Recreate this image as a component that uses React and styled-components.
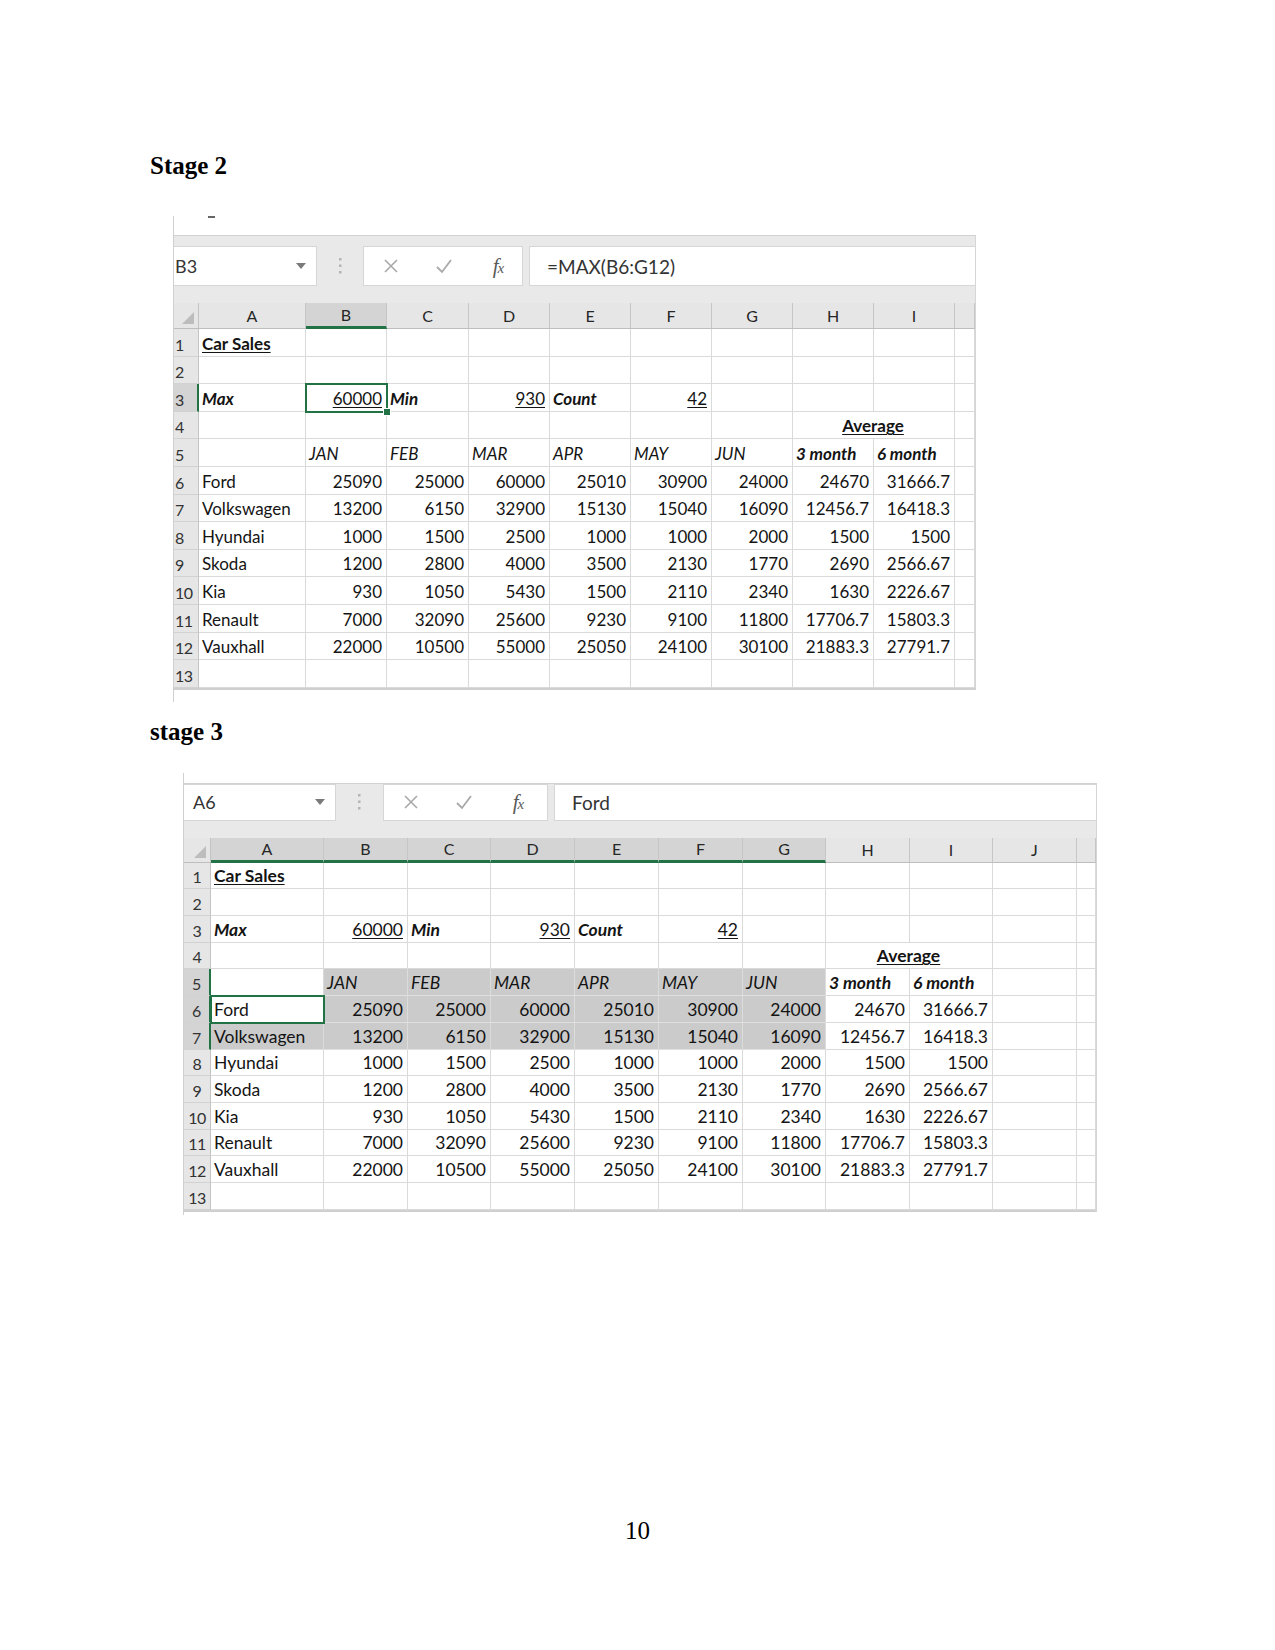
import React from "react";
import styled, { createGlobalStyle, css } from "styled-components";

const GREEN = "#217346";

const GlobalStyle = createGlobalStyle`
  body {
    margin: 0;
    background: #fff;
  }
`;

const cars = [
  ["Ford", "25090", "25000", "60000", "25010", "30900", "24000", "24670", "31666.7"],
  ["Volkswagen", "13200", "6150", "32900", "15130", "15040", "16090", "12456.7", "16418.3"],
  ["Hyundai", "1000", "1500", "2500", "1000", "1000", "2000", "1500", "1500"],
  ["Skoda", "1200", "2800", "4000", "3500", "2130", "1770", "2690", "2566.67"],
  ["Kia", "930", "1050", "5430", "1500", "2110", "2340", "1630", "2226.67"],
  ["Renault", "7000", "32090", "25600", "9230", "9100", "11800", "17706.7", "15803.3"],
  ["Vauxhall", "22000", "10500", "55000", "25050", "24100", "30100", "21883.3", "27791.7"],
];

const months = ["JAN", "FEB", "MAR", "APR", "MAY", "JUN"];

// builds 13 rows of cells, each row padded to `ncols` data columns
const buildRows = (ncols) => {
  const pad = (cells) => {
    const used = cells.reduce((n, c) => n + (c.span || 1), 0);
    return [...cells, ...Array.from({ length: ncols - used }, () => ({}))];
  };
  const rows = [];
  rows.push(pad([{ text: "Car Sales ", kind: "title" }]));
  rows.push(pad([]));
  rows.push(
    pad([
      { text: "Max", kind: "label" },
      { text: "60000", kind: "under" },
      { text: "Min", kind: "label" },
      { text: "930", kind: "under" },
      { text: "Count", kind: "label" },
      { text: "42", kind: "under" },
    ])
  );
  rows.push(pad([{}, {}, {}, {}, {}, {}, {}, { text: "Average", kind: "average", span: 2 }]));
  rows.push(
    pad([
      {},
      ...months.map((m) => ({ text: m, kind: "month" })),
      { text: "3 month", kind: "label" },
      { text: "6 month", kind: "label" },
    ])
  );
  cars.forEach((car) => {
    rows.push(
      pad(car.map((v, i) => ({ text: v, kind: i === 0 ? "name" : "num" })))
    );
  });
  rows.push(pad([]));
  return rows;
};

const kindStyles = {
  title: { $bold: true, $under: true },
  label: { $bold: true, $italic: true },
  under: { $under: true, $align: "right" },
  month: { $italic: true },
  average: { $bold: true, $under: true, $align: "center" },
  name: {},
  num: { $align: "right" },
};

const Page = styled.div`
  width: 1275px;
  min-height: 1650px;
  font-family: "Liberation Serif", "Times New Roman", serif;
  color: #000;
`;

const Content = styled.div`
  padding: 151px 0 0 150px;
`;

const Heading = styled.h2`
  margin: ${(p) => p.$top || 0}px 0 0;
  font: bold 25px/29px "Liberation Serif", "Times New Roman", serif;
`;

const Shot = styled.div`
  width: ${(p) => p.$width}px;
  margin-left: ${(p) => p.$left}px;
  margin-top: ${(p) => p.$top}px;
`;

const Strip = styled.div`
  height: ${(p) => p.$h}px;
  border-left: 1px solid #d0d0d0;
`;

const Dash = styled.div`
  width: 7px;
  height: 2px;
  margin: 2px 0 0 34px;
  background: #666;
`;

const Band = styled.div`
  display: flex;
  align-items: flex-start;
  box-sizing: border-box;
  height: ${(p) => p.$h}px;
  padding-top: ${(p) => p.$pad}px;
  background: #e9e9e9;
  border-top: 1px solid #d2d2d2;
  border-left: 1px solid #d0d0d0;
  border-right: 1px solid #d6d6d6;
`;

const NameBox = styled.div`
  display: flex;
  align-items: center;
  justify-content: space-between;
  box-sizing: border-box;
  width: ${(p) => p.$w}px;
  height: ${(p) => p.$h}px;
  padding: 0 10px 0 ${(p) => p.$padLeft}px;
  background: #fff;
  border: 1px solid #d6d6d6;
  border-left: none;
  font: 18px Lato, "Liberation Sans", sans-serif;
  color: #333;
`;

const Dots = styled.div`
  display: flex;
  align-items: center;
  justify-content: center;
  width: ${(p) => p.$w}px;
  height: ${(p) => p.$h}px;
`;

const ButtonBox = styled.div`
  display: grid;
  grid-template-columns: 54px 52px 56px;
  align-items: center;
  justify-items: center;
  box-sizing: border-box;
  width: ${(p) => p.$w}px;
  height: ${(p) => p.$h}px;
  background: #fff;
  border: 1px solid #d6d6d6;
`;

const Fx = styled.span`
  font: italic 21px "Liberation Serif", serif;
  color: #5a5a5a;
  letter-spacing: -1px;

  small {
    font-size: 15px;
  }
`;

const FormulaBox = styled.div`
  flex: 1;
  display: flex;
  align-items: center;
  box-sizing: border-box;
  height: ${(p) => p.$h}px;
  margin-left: 6px;
  padding-left: ${(p) => p.$padLeft}px;
  background: #fff;
  border: 1px solid #d6d6d6;
  border-right: none;
  font: 19px Lato, "Liberation Sans", sans-serif;
  color: #333;
`;

const Sheet = styled.div`
  display: grid;
  grid-template-columns: ${(p) => p.$cols};
  grid-template-rows: ${(p) => p.$headH}px repeat(13, ${(p) => p.$rowH}px);
  border-left: 1px solid #d0d0d0;
  border-right: 1px solid #d6d6d6;
  border-bottom: 2px solid #cfcfcf;
  font-family: Lato, "Liberation Sans", sans-serif;
  background: #fff;
`;

const Corner = styled.div`
  display: flex;
  align-items: flex-end;
  justify-content: flex-end;
  padding: 0 4px 4px 0;
  background: #e6e6e6;
  border-right: 1px solid #c4c4c4;
  border-bottom: 1px solid #bdbdbd;
`;

const ColHead = styled.div`
  display: flex;
  align-items: center;
  justify-content: center;
  background: ${(p) => (p.$sel ? "#d4d4d4" : "#e6e6e6")};
  border-right: 1px solid #c6c6c6;
  border-bottom: ${(p) => (p.$sel ? `3px solid ${GREEN}` : "1px solid #bdbdbd")};
  font-size: ${(p) => p.$fs}px;
  color: #262626;
`;

const RowHead = styled.div`
  display: flex;
  align-items: flex-end;
  justify-content: ${(p) => (p.$center ? "center" : "flex-start")};
  padding: 0 0 2px ${(p) => (p.$center ? 0 : 1)}px;
  background: ${(p) => (p.$sel ? "#d4d4d4" : "#e6e6e6")};
  border-right: ${(p) => (p.$sel ? `2px solid ${GREEN}` : "1px solid #c4c4c4")};
  border-bottom: 1px solid #d2d2d2;
  font-size: ${(p) => p.$fs}px;
  letter-spacing: -0.5px;
  color: #333;
`;

const Cell = styled.div`
  position: relative;
  display: flex;
  align-items: flex-end;
  justify-content: ${(p) =>
    p.$align === "right" ? "flex-end" : p.$align === "center" ? "center" : "flex-start"};
  grid-column: span ${(p) => p.$span || 1};
  min-width: 0;
  padding: 0 4px 2px 3px;
  white-space: nowrap;
  background: ${(p) => (p.$shade ? "#cbcbcb" : "#fff")};
  border-right: 1px solid ${(p) => (p.$shade ? "#dcdcdc" : "#dadada")};
  border-bottom: 1px solid ${(p) => (p.$shade ? "#e0e0e0" : "#dadada")};
  font-size: ${(p) => p.$fs}px;
  font-weight: ${(p) => (p.$bold ? 700 : 400)};
  font-style: ${(p) => (p.$italic ? "italic" : "normal")};
  text-decoration: ${(p) => (p.$under ? "underline" : "none")};
  text-underline-offset: 2px;
  color: #141414;

  ${(p) =>
    p.$active &&
    css`
      outline: 2px solid ${GREEN};
      outline-offset: -1px;
      z-index: 1;
    `}
`;

const Handle = styled.span`
  position: absolute;
  right: -5px;
  bottom: -5px;
  width: 6px;
  height: 6px;
  background: ${GREEN};
  border: 1px solid #fff;
`;

const Footer = styled.div`
  margin-top: ${(p) => p.$top}px;
  text-align: center;
  font: 25px/29px "Liberation Serif", "Times New Roman", serif;
`;

const Arrow = () => (
  <svg width="10" height="6" viewBox="0 0 10 6">
    <polygon points="0,0 10,0 5,6" fill="#7a7a7a" />
  </svg>
);

const VDots = () => (
  <svg width="3" height="16" viewBox="0 0 3 16">
    <rect x="0" y="0" width="2.5" height="2.5" fill="#b4b4b4" />
    <rect x="0" y="6.5" width="2.5" height="2.5" fill="#b4b4b4" />
    <rect x="0" y="13" width="2.5" height="2.5" fill="#b4b4b4" />
  </svg>
);

const Cross = () => (
  <svg width="16" height="16" viewBox="0 0 16 16">
    <path d="M2 2 L14 14 M14 2 L2 14" stroke="#a9a9a9" strokeWidth="1.6" fill="none" />
  </svg>
);

const Check = () => (
  <svg width="18" height="16" viewBox="0 0 18 16">
    <path d="M2 9 L7 14 L16 2" stroke="#a9a9a9" strokeWidth="1.8" fill="none" />
  </svg>
);

const CornerMark = () => (
  <svg width="12" height="12" viewBox="0 0 12 12">
    <polygon points="12,0 12,12 0,12" fill="#bdbdbd" />
  </svg>
);

const FormulaBar = ({ cfg }) => (
  <Band $h={cfg.bandH} $pad={cfg.bandPad}>
    <NameBox $w={cfg.nameW} $h={cfg.boxH} $padLeft={cfg.namePad}>
      {cfg.name}
      <Arrow />
    </NameBox>
    <Dots $w={cfg.dotsW} $h={cfg.boxH}>
      <VDots />
    </Dots>
    <ButtonBox $w={cfg.btnW} $h={cfg.boxH}>
      <Cross />
      <Check />
      <Fx>
        f<small>x</small>
      </Fx>
    </ButtonBox>
    <FormulaBox $h={cfg.boxH} $padLeft={cfg.formulaPad}>
      {cfg.formula}
    </FormulaBox>
  </Band>
);

const Spreadsheet = ({ cfg }) => {
  const rows = buildRows(cfg.letters.length);
  return (
    <Shot $width={cfg.width} $left={cfg.left} $top={cfg.top}>
      <Strip $h={cfg.stripH}>{cfg.dash && <Dash />}</Strip>
      <FormulaBar cfg={cfg} />
      <Sheet $cols={cfg.cols} $headH={cfg.headH} $rowH={cfg.rowH}>
        <Corner>
          <CornerMark />
        </Corner>
        {cfg.letters.map((l) => (
          <ColHead key={l} $sel={cfg.selCols.includes(l)} $fs={cfg.headFs}>
            {l}
          </ColHead>
        ))}
        <ColHead $fs={cfg.headFs} />
        {rows.map((row, r) => (
          <React.Fragment key={r}>
            <RowHead
              $sel={cfg.selRows.includes(r + 1)}
              $fs={cfg.rowFs}
              $center={cfg.rowCenter}
            >
              {r + 1}
            </RowHead>
            {(() => {
              let c = 0;
              return row.map((cell, i) => {
                const col = c;
                c += cell.span || 1;
                const active = cfg.active[0] === r + 1 && cfg.active[1] === col;
                return (
                  <Cell
                    key={i}
                    $span={cell.span}
                    $fs={cfg.fs}
                    $active={active}
                    $shade={!active && cfg.shade(r + 1, col)}
                    {...(kindStyles[cell.kind] || {})}
                  >
                    {cell.text}
                    {active && cfg.handle && <Handle />}
                  </Cell>
                );
              });
            })()}
            <Cell $fs={cfg.fs} />
          </React.Fragment>
        ))}
      </Sheet>
      <Strip $h={cfg.tailH} />
    </Shot>
  );
};

const stage2 = {
  width: 803,
  left: 23,
  top: 36,
  stripH: 19,
  dash: true,
  bandH: 68,
  bandPad: 10,
  boxH: 40,
  nameW: 143,
  namePad: 1,
  name: "B3",
  dotsW: 46,
  btnW: 160,
  formulaPad: 17,
  formula: "=MAX(B6:G12)",
  cols: "25px 107px 81px 82px 81px 81px 81px 81px 81px 81px 1fr",
  headH: 26,
  rowH: 27.6,
  headFs: 16,
  rowFs: 16,
  rowCenter: false,
  fs: 17,
  letters: ["A", "B", "C", "D", "E", "F", "G", "H", "I"],
  selCols: ["B"],
  selRows: [3],
  active: [3, 1],
  handle: true,
  shade: () => false,
  tailH: 12,
};

const stage3 = {
  width: 914,
  left: 33,
  top: 27,
  stripH: 10,
  dash: false,
  bandH: 55,
  bandPad: 0,
  boxH: 37,
  nameW: 152,
  namePad: 9,
  name: "A6",
  dotsW: 47,
  btnW: 165,
  formulaPad: 17,
  formula: "Ford",
  cols: "27px 113px 84px 83px 84px 84px 84px 83px 84px 83px 84px 1fr",
  headH: 25,
  rowH: 26.7,
  headFs: 16,
  rowFs: 16,
  rowCenter: true,
  fs: 17.5,
  letters: ["A", "B", "C", "D", "E", "F", "G", "H", "I", "J"],
  selCols: ["A", "B", "C", "D", "E", "F", "G"],
  selRows: [5, 6, 7],
  active: [6, 0],
  handle: false,
  shade: (r, c) => (r === 5 && c >= 1 && c <= 6) || ((r === 6 || r === 7) && c <= 6),
  tailH: 3,
};

export default function App() {
  return (
    <Page>
      <GlobalStyle />
      <Content>
        <Heading>Stage 2</Heading>
        <Spreadsheet cfg={stage2} />
        <Heading $top={15}>stage 3</Heading>
        <Spreadsheet cfg={stage3} />
      </Content>
      <Footer $top={301}>10</Footer>
    </Page>
  );
}
